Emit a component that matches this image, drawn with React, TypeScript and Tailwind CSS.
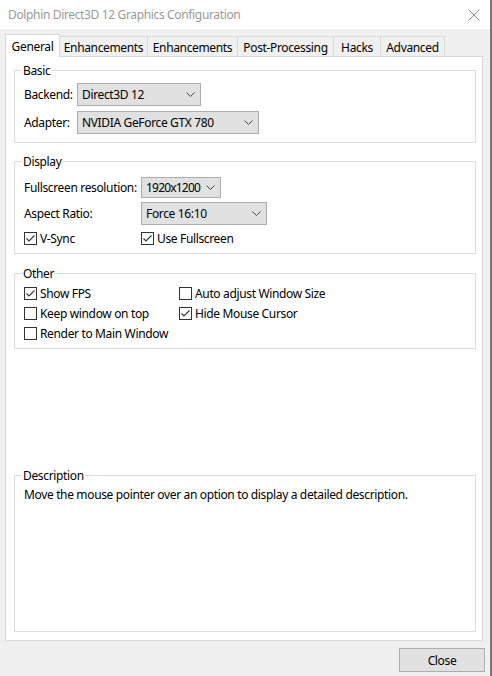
import React from "react";

function Chevron() {
  return (
    <svg width="9" height="5" viewBox="0 0 9 5" className="shrink-0">
      <path d="M0.5 0.5 L4.5 4.5 L8.5 0.5" stroke="#444" strokeWidth="1" fill="none" />
    </svg>
  );
}

function Combo({ text, w, h, tight }: { text: string; w: string; h: string; tight?: boolean }) {
  return (
    <div className={`flex items-center justify-between border border-[#adadad] bg-[#e1e1e1] pl-[4px] pr-[5px] ${w} ${h}`}>
      <span className={tight ? "tracking-[-0.8px]" : ""}>{text}</span>
      <Chevron />
    </div>
  );
}

function Check({ label, checked }: { label: string; checked?: boolean }) {
  return (
    <div className="flex items-center gap-[3px]">
      <div className="flex h-[13px] w-[13px] items-center justify-center border border-[#333333] bg-white">
        {checked && (
          <svg width="11" height="11" viewBox="0 0 11 11">
            <path d="M1.5 5.5 L4 8 L9.5 2.5" stroke="#333" strokeWidth="1.1" fill="none" />
          </svg>
        )}
      </div>
      <span>{label}</span>
    </div>
  );
}

function Group({ title, className, children }: { title: string; className?: string; children?: React.ReactNode }) {
  return (
    <fieldset className={`border border-[#dcdcdc] ${className ?? ""}`}>
      <legend className="ml-[7px] px-[1px] leading-[15px]">{title}</legend>
      {children}
    </fieldset>
  );
}

const tabs = [
  { t: "General", w: "w-[55px]" },
  { t: "Enhancements", w: "w-[89px]" },
  { t: "Enhancements", w: "w-[91px]" },
  { t: "Post-Processing", w: "w-[97px]" },
  { t: "Hacks", w: "w-[48px]" },
  { t: "Advanced", w: "w-[65px]" },
];

export default function App() {
  return (
    <div className="flex h-[676px] w-[492px] whitespace-nowrap font-['Noto_Sans',sans-serif] text-[12px] leading-[15px] tracking-[-0.35px] text-black">
      <div className="flex h-full w-[490px] flex-col bg-[#f0f0f0]">
        <div className="flex h-[29px] items-center justify-between bg-white pl-[8px] pr-[10px]">
          <span className="text-[#999999]">Dolphin Direct3D 12 Graphics Configuration</span>
          <svg width="12" height="12" viewBox="0 0 12 12">
            <path d="M0.5 0.5 L11.5 11.5 M11.5 0.5 L0.5 11.5" stroke="#8c8c8c" strokeWidth="1" fill="none" />
          </svg>
        </div>

        <div className="ml-[5px] mt-[5px] flex h-[22px] items-end">
          {tabs.map((tab, i) =>
            i === 0 ? (
              <div
                key={i}
                className={`relative z-10 -mb-px flex h-[23px] items-center justify-center border border-b-0 border-[#d9d9d9] bg-white ${tab.w}`}
              >
                {tab.t}
              </div>
            ) : (
              <div
                key={i}
                className={`-ml-px flex h-[20px] items-center justify-center border border-b-0 border-[#d9d9d9] bg-[#f0f0f0] pt-[1px] ${tab.w}`}
              >
                {tab.t}
              </div>
            )
          )}
        </div>

        <div className="ml-[5px] flex h-[585px] w-[478px] flex-col border border-[#d9d9d9] bg-white pb-[8px] pl-[8px] pr-[6px] pt-[6px]">
          <Group title="Basic">
            <div className="flex flex-col gap-[5px] pb-[8px] pl-[9px] pt-[5px]">
              <div className="flex items-center">
                <span className="w-[53px]">Backend:</span>
                <Combo text="Direct3D 12" w="w-[124px]" h="h-[23px]" />
              </div>
              <div className="flex items-center">
                <span className="w-[53px]">Adapter:</span>
                <Combo text="NVIDIA GeForce GTX 780" w="w-[182px]" h="h-[23px]" />
              </div>
            </div>
          </Group>

          <Group title="Display" className="mt-[11px]">
            <div className="flex flex-col pb-[7px] pl-[9px] pt-[8px]">
              <div className="flex items-center">
                <span className="w-[117px]">Fullscreen resolution:</span>
                <Combo text="1920x1200" w="w-[80px]" h="h-[21px]" tight />
              </div>
              <div className="mt-[4px] flex items-center">
                <span className="w-[117px]">Aspect Ratio:</span>
                <Combo text="Force 16:10" w="w-[126px]" h="h-[23px]" />
              </div>
              <div className="mt-[6px] flex h-[15px] items-center">
                <div className="w-[117px]">
                  <Check label="V-Sync" checked />
                </div>
                <Check label="Use Fullscreen" checked />
              </div>
            </div>
          </Group>

          <Group title="Other" className="mt-[12px]">
            <div className="grid grid-cols-[155px_1fr] pb-[5px] pl-[9px] pt-[2px]">
              <div className="flex h-[20px] items-center"><Check label="Show FPS" checked /></div>
              <div className="flex h-[20px] items-center"><Check label="Auto adjust Window Size" /></div>
              <div className="flex h-[20px] items-center"><Check label="Keep window on top" /></div>
              <div className="flex h-[20px] items-center"><Check label="Hide Mouse Cursor" checked /></div>
              <div className="flex h-[20px] items-center"><Check label="Render to Main Window" /></div>
            </div>
          </Group>

          <Group title="Description" className="mt-auto h-[164px]">
            <div className="pl-[9px] pt-[4px]">
              Move the mouse pointer over an option to display a detailed description.
            </div>
          </Group>
        </div>

        <div className="mr-[5px] mt-[7px] flex justify-end">
          <div className="flex h-[24px] w-[86px] items-center justify-center border border-[#adadad] bg-[#e1e1e1]">
            Close
          </div>
        </div>
      </div>
      <div className="h-full w-[2px] bg-[#777777]" />
    </div>
  );
}
